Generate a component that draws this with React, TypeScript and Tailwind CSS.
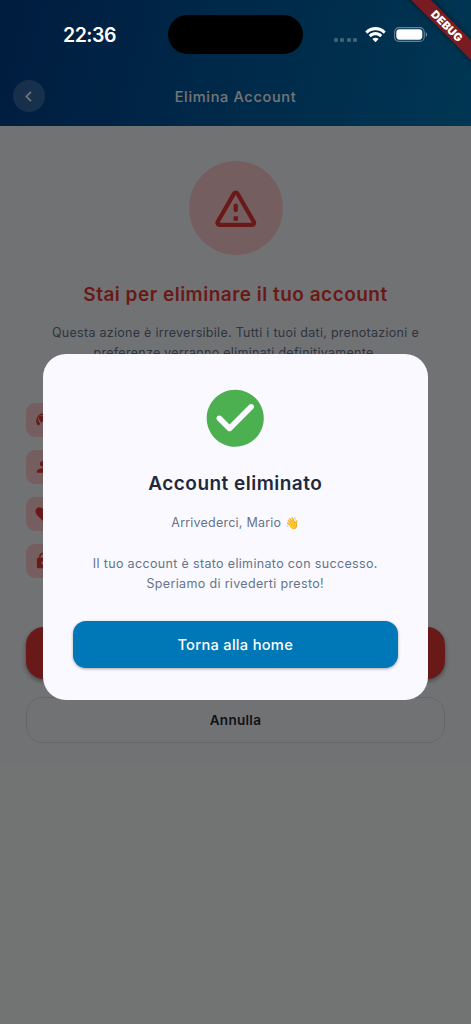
import React from "react";
import { MdBeachAccess, MdFavorite, MdLock, MdPerson } from "react-icons/md";

const risks = [
  { Icon: MdBeachAccess },
  { Icon: MdPerson },
  { Icon: MdFavorite },
  { Icon: MdLock },
];

function StatusBar() {
  return (
    <div className="absolute inset-x-0 top-0 h-[70px]">
      <div className="flex h-full items-center pl-[63px]">
        <span className="w-[105px] text-[19.500px] font-semibold leading-6 tracking-[-0.5px] text-white">22:36</span>
        <div className="-mt-px h-[39px] w-[135px] rounded-full bg-black" />
        <div className="mt-[9px] ml-[31px] flex gap-[2.4px]">
          {[0, 1, 2, 3].map((i) => (
            <span key={i} className="size-1 rounded-[1.3px] bg-white/25" />
          ))}
        </div>
        <svg className="-mt-[2px] ml-[8px] h-[15px] w-[21px]" viewBox="0 0 17 12.2" fill="#fff">
          <path d="M8.5 2.6c2.4 0 4.7.9 6.4 2.6.1.1.3.1.5 0l1.2-1.3c.1-.1.1-.4 0-.5-4.5-4.4-11.700-4.400-16.200 0-.1.1-.1.400 0 .5l1.200 1.300c.2.100.400.100.500 0C3.800 3.500 6.100 2.600 8.500 2.600zm0 4.100c1.300 0 2.600.5 3.600 1.400.1.100.300.100.500 0l1.200-1.300c.1-.1.100-.4 0-.5-3-2.900-7.600-2.900-10.600 0-.1.100-.1.400 0 .5l1.200 1.300c.2.100.400.100.500 0 1-.9 2.300-1.400 3.600-1.400zm2.300 2.800c.1.100.1.300 0 .5l-2.100 2.100c-.1.100-.3.100-.4 0L6.200 10c-.1-.2-.1-.4 0-.5 1.300-1.100 3.300-1.100 4.600 0z" />
        </svg>
        <svg className="-mt-[1px] ml-[8px] h-[15px] w-[34px]" viewBox="0 0 34 15" fill="none">
          <rect x=".6" y=".6" width="29.600" height="13.800" rx="4.500" stroke="#fff" strokeOpacity=".4" strokeWidth="1.100" />
          <rect x="2.300" y="2.300" width="26" height="10.400" rx="3.100" fill="#fff" />
          <path d="M31.700 5.200c1.800.6 1.800 4 0 4.600z" fill="#fff" fillOpacity=".45" />
        </svg>
      </div>
    </div>
  );
}

function DebugRibbon() {
  return (
    <div className="absolute top-0 right-0 size-[75px] overflow-hidden">
      <div className="absolute top-[18px] -left-[11px] flex h-[14px] w-[122px] rotate-45 items-center justify-center bg-[#781b23] shadow-[0_0_6px_rgba(0,0,0,0.5)]">
        <span className="pl-[3px] text-[11px] font-black leading-none tracking-[0.2px] text-white">DEBUG</span>
      </div>
    </div>
  );
}

function AccountPage() {
  return (
    <div className="flex h-full flex-col bg-[#f7f9fb]">
      <header className="flex h-[126px] items-end bg-linear-[105deg] from-[#023e8a] to-[#0077b6] px-[13px] pb-[14px]">
        <button className="flex size-8 items-center justify-center rounded-full bg-white/20">
          <svg className="-ml-px h-[11px] w-[7px]" viewBox="0 0 7 11" fill="none" stroke="#fff" strokeWidth="1.700">
            <path d="M6 .8 1.400 5.500 6 10.200" />
          </svg>
        </button>
        <h1 className="-mb-px flex-1 pr-8 text-center text-[14.500px] font-medium leading-8 tracking-[0.68px] text-white">Elimina Account</h1>
      </header>
      <main className="flex flex-col items-center px-[26px] pt-[34.500px]">
        <div className="flex size-[94px] items-center justify-center rounded-full bg-[#ffcdd2]">
          <svg className="size-[51.500px]" viewBox="0 0 24 24" fill="#e53935">
            <path d="M12 5.990 19.530 19H4.470L12 5.990M2.740 18c-.77 1.330.19 3 1.730 3h15.060c1.540 0 2.500-1.670 1.730-3L13.730 4.990c-.77-1.330-2.690-1.330-3.460 0L2.740 18zM11 11v2c0 .55.45 1 1 1s1-.45 1-1v-2c0-.55-.45-1-1-1s-1 .45-1 1zm0 5h2v2h-2z" />
          </svg>
        </div>
        <h2 className="mt-[27px] whitespace-nowrap text-[19px] font-semibold leading-[26px] tracking-[0.49px] text-[#e53935]">Stai per eliminare il tuo account</h2>
        <p className="mt-[15px] whitespace-nowrap text-center text-[12.500px] leading-[20.500px] tracking-[0.28px] text-[#64748b]">
          Questa azione è irreversibile. Tutti i tuoi dati, prenotazioni e<br />preferenze verranno eliminati definitivamente.
        </p>
        <div className="mt-[39px] flex w-full flex-col gap-[13px]">
          {risks.map(({ Icon }, i) => (
            <div key={i} className="flex size-[34px] items-center justify-center rounded-[9px] bg-[#ffcdd2] text-[#e53935]">
              <Icon size={17.6} />
            </div>
          ))}
        </div>
        <div className="mt-[49.500px] h-[51.500px] w-full rounded-[18px] bg-[#e53935] shadow-[0_2px_5px_rgba(0,0,0,0.400)]" />
        <button className="mt-[18px] h-[46px] w-full rounded-[17px] border border-[#e0e0ea] pt-px text-[13.500px] font-semibold tracking-[0.3px] text-[#1e293b]">Annulla</button>
      </main>
    </div>
  );
}

function SuccessDialog() {
  return (
    <div className="mt-[354px] flex h-[346px] w-[385px] flex-col items-center rounded-[23px] bg-[#faf9ff] pr-[30px] pl-[29.500px] pt-[30px]">
      <svg className="size-[68.500px]" viewBox="0 0 24 24" fill="#4caf50">
        <path d="M12 2C6.480 2 2 6.480 2 12s4.480 10 10 10 10-4.480 10-10S17.520 2 12 2zM9.290 16.290 5.700 12.700c-.39-.39-.39-1.020 0-1.410.39-.39 1.020-.39 1.410 0L10 14.170l6.880-6.880c.39-.39 1.020-.39 1.410 0 .39.39.39 1.020 0 1.410l-7.590 7.590c-.38.39-1.020.39-1.410 0z" />
      </svg>
      <h2 className="mt-[18px] whitespace-nowrap text-[19px] font-semibold leading-[26px] tracking-[0.48px] text-[#1e293b]">Account eliminato</h2>
      <p className="mt-[16.300px] whitespace-nowrap text-center text-[12.500px] leading-[20.400px] tracking-[0.340px] text-[#64748b]">
        <span className="tracking-[0.22px]">Arrivederci, Mario <span className="text-[11.500px]">👋</span></span><br /><br />Il tuo account è stato eliminato con successo.<br />Speriamo di rivederti presto!
      </p>
      <button className="mt-[26.700px] h-[47px] w-[325.500px] rounded-[13px] bg-[#0077b6] text-[14.700px] font-medium tracking-[0.27px] text-white shadow-[0_1px_3px_rgba(0,0,0,0.350)]">Torna alla home</button>
    </div>
  );
}

export default function App() {
  return (
    <div className="relative h-[1024px] w-[471px] overflow-hidden font-['Inter',sans-serif]">
      <AccountPage />
      <div className="absolute inset-0 flex justify-center bg-black/54">
        <SuccessDialog />
      </div>
      <StatusBar />
      <DebugRibbon />
    </div>
  );
}
